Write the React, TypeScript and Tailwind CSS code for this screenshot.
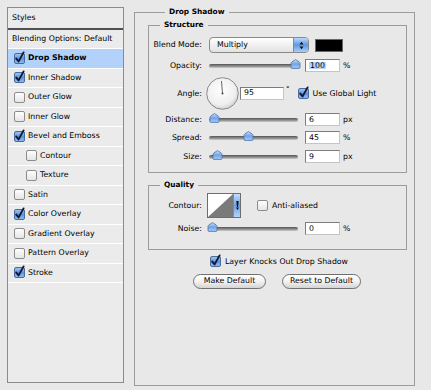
import React from 'react';

const font = { fontFamily: '"DejaVu Sans", Verdana, sans-serif' };

const CheckBox = ({ checked }: { checked?: boolean }) => (
  <svg width="11" height="11" viewBox="0 0 11 11" className="shrink-0 overflow-visible">
    <defs>
      <linearGradient id="cbOn" x1="0" y1="0" x2="0" y2="1">
        <stop offset="0" stopColor="#a9c9f2" />
        <stop offset="0.5" stopColor="#5d93de" />
        <stop offset="1" stopColor="#8fc0f5" />
      </linearGradient>
      <linearGradient id="cbOff" x1="0" y1="0" x2="0" y2="1">
        <stop offset="0" stopColor="#ffffff" />
        <stop offset="1" stopColor="#e4e4e4" />
      </linearGradient>
    </defs>
    <rect x="0.5" y="0.5" width="10" height="10" rx="1.5" fill={checked ? 'url(#cbOn)' : 'url(#cbOff)'} stroke={checked ? '#4a6b9e' : '#8c8c8c'} />
    {checked && (
      <path d="M2.3 5.6 L4.6 8.4 L9.6 -0.6" fill="none" stroke="#101830" strokeWidth="1.9" strokeLinecap="round" strokeLinejoin="round" />
    )}
  </svg>
);

const Thumb = () => (
  <svg width="11" height="10" viewBox="0 0 11 10">
    <defs>
      <linearGradient id="th" x1="0" y1="0" x2="0" y2="1">
        <stop offset="0" stopColor="#cfe3fb" />
        <stop offset="0.5" stopColor="#6ea3e6" />
        <stop offset="1" stopColor="#a8d0fa" />
      </linearGradient>
    </defs>
    <path d="M1 4.5 Q1 3.5 2 2.8 L5.5 0.6 L9 2.8 Q10 3.5 10 4.5 V8.5 Q10 9.4 9 9.4 H2 Q1 9.4 1 8.5 Z" fill="url(#th)" stroke="#4d6fa3" strokeWidth="0.8" />
  </svg>
);

const Slider = ({ pos }: { pos: number }) => (
  <div className="relative w-[89px] h-[10px] flex items-center">
    <div className="w-full h-[4px] rounded-full bg-gradient-to-b from-[#555] to-[#a5a5a5] border-b border-[#bbb]" />
    <div className="absolute top-[-2px]" style={{ left: pos }}>
      <Thumb />
    </div>
  </div>
);

const Field = ({ value, w = 35, selected }: { value: string; w?: number; selected?: boolean }) => (
  <div
    className="h-[13px] bg-white border border-[#7c7c7c] border-r-[#c4c4c4] border-b-[#c4c4c4] flex items-center pl-[3px] text-[7.8px] leading-none"
    style={{ width: w }}
  >
    {selected ? <span className="bg-[#b5d3fb] px-[1px]">{value}</span> : value}
  </div>
);

const Label = ({ children }: { children: React.ReactNode }) => (
  <div className="w-[54px] text-right pr-[1px] shrink-0">{children}</div>
);

const ListRow = ({
  label,
  checked,
  indent,
  active,
}: {
  label: string;
  checked?: boolean;
  indent?: boolean;
  active?: boolean;
}) => (
  <div
    className={`h-[19.5px] flex items-center gap-[3px] border-b border-white ${active ? 'bg-[#b2d2fb] font-bold' : ''} ${
      indent ? 'pl-[18px]' : 'pl-[6px]'
    }`}
  >
    <CheckBox checked={checked} />
    <span>{label}</span>
  </div>
);

const Dial = () => (
  <svg width="33" height="33" viewBox="0 0 33 33" className="shrink-0">
    <defs>
      <radialGradient id="dial" cx="0.45" cy="0.4" r="0.65">
        <stop offset="0" stopColor="#ffffff" />
        <stop offset="0.7" stopColor="#efefef" />
        <stop offset="1" stopColor="#c8c8c8" />
      </radialGradient>
    </defs>
    <circle cx="16.5" cy="16.5" r="15.8" fill="url(#dial)" stroke="#8a8a8a" strokeWidth="1" />
    <line x1="16.5" y1="16.5" x2="15.5" y2="4" stroke="#555" strokeWidth="0.9" />
    <circle cx="16.5" cy="16.5" r="1" fill="#444" />
  </svg>
);

export default function App() {
  return (
    <div className="w-[431px] h-[390px] bg-[#e8e8e8] flex pt-[7px] pl-[7px] text-[7.8px] text-black" style={font}>
      {/* style list */}
      <div className="w-[117px] h-[376px] border border-[#8b8b8b] bg-[#ebebeb] flex flex-col">
        <div className="h-[20px] flex items-center pl-[4px]">Styles</div>
        <div className="h-[2px] bg-[#505050]" />
        <div className="h-[19px] flex items-center pl-[4px] border-b border-white">Blending Options: Default</div>
        <ListRow label="Drop Shadow" checked active />
        <ListRow label="Inner Shadow" checked />
        <ListRow label="Outer Glow" />
        <ListRow label="Inner Glow" />
        <ListRow label="Bevel and Emboss" checked />
        <ListRow label="Contour" indent />
        <ListRow label="Texture" indent />
        <ListRow label="Satin" />
        <ListRow label="Color Overlay" checked />
        <ListRow label="Gradient Overlay" />
        <ListRow label="Pattern Overlay" />
        <ListRow label="Stroke" checked />
      </div>

      {/* settings */}
      <fieldset className="ml-[10px] w-[281px] h-[379px] border border-[#9c9c9c] pl-[13px] pr-[7px] flex flex-col">
        <legend className="ml-[17px] px-[4px] font-bold leading-[10px] text-[7.4px]">Drop Shadow</legend>

        <fieldset className="mt-[3px] border border-[#9c9c9c] h-[153px]">
          <legend className="ml-[11px] px-[4px] font-bold leading-[10px] text-[7.4px]">Structure</legend>
          <div className="flex flex-col">
            {/* blend mode */}
            <div className="mt-[7px] h-[16px] flex items-center">
              <Label>Blend Mode:</Label>
              <div className="ml-[6px] w-[100px] h-[16px] rounded-[4px] border border-[#8a8a8a] bg-gradient-to-b from-white to-[#e2e2e2] flex items-center overflow-hidden">
                <span className="flex-1 pl-[7px]">Multiply</span>
                <div className="w-[15px] h-full bg-gradient-to-b from-[#bcd8fa] via-[#5f98e2] to-[#a8d0f8] border-l border-[#6d8cc0] flex flex-col items-center justify-center gap-[1px]">
                  <svg width="5" height="9" viewBox="0 0 5 9">
                    <path d="M0.5 3.5 L2.5 0.8 L4.5 3.5 Z M0.5 5.5 L2.5 8.2 L4.5 5.5 Z" fill="#111" />
                  </svg>
                </div>
              </div>
              <div className="ml-[6px] w-[28px] h-[13px] bg-black border border-[#666]" />
            </div>

            {/* opacity */}
            <div className="mt-[6px] h-[13px] flex items-center">
              <Label>Opacity:</Label>
              <div className="ml-[6px]">
                <Slider pos={81} />
              </div>
              <div className="ml-[7px]">
                <Field value="100" selected />
              </div>
              <span className="ml-[3px]">%</span>
            </div>

            {/* angle */}
            <div className="mt-[5px] h-[33px] flex items-center">
              <Label>Angle:</Label>
              <div className="ml-[3px]">
                <Dial />
              </div>
              <div className="ml-[1px] h-[14px]">
                <Field value="95" w={44} />
              </div>
              <span className="ml-[2px] self-start mt-[7px] text-[7px]">°</span>
              <div className="ml-[8px] flex items-center gap-[4px]">
                <CheckBox checked />
                <span>Use Global Light</span>
              </div>
            </div>

            {/* distance */}
            <div className="mt-[3px] h-[13px] flex items-center">
              <Label>Distance:</Label>
              <div className="ml-[6px]">
                <Slider pos={0} />
              </div>
              <div className="ml-[7px]">
                <Field value="6" />
              </div>
              <span className="ml-[3px]">px</span>
            </div>

            {/* spread */}
            <div className="mt-[5px] h-[13px] flex items-center">
              <Label>Spread:</Label>
              <div className="ml-[6px]">
                <Slider pos={34} />
              </div>
              <div className="ml-[7px]">
                <Field value="45" />
              </div>
              <span className="ml-[3px]">%</span>
            </div>

            {/* size */}
            <div className="mt-[6px] h-[13px] flex items-center">
              <Label>Size:</Label>
              <div className="ml-[6px]">
                <Slider pos={3} />
              </div>
              <div className="ml-[7px]">
                <Field value="9" />
              </div>
              <span className="ml-[3px]">px</span>
            </div>
          </div>
        </fieldset>

        <fieldset className="mt-[7px] border border-[#9c9c9c] h-[70px]">
          <legend className="ml-[11px] px-[4px] font-bold leading-[10px] text-[7.4px]">Quality</legend>
          <div className="flex flex-col">
            <div className="mt-[3px] h-[25px] flex items-center">
              <Label>Contour:</Label>
              <div className="ml-[4px] flex h-[25px] border border-[#6e6e6e]">
                <svg width="25" height="23" viewBox="0 0 25 23" className="bg-white">
                  <polygon points="0,23 25,0 25,23" fill="#7a7a7a" />
                </svg>
                <div className="w-[7px] bg-gradient-to-b from-[#c6defb] via-[#6aa0e4] to-[#b4d6fa] border-l border-[#6d8cc0] flex items-center justify-center">
                  <svg width="3" height="9" viewBox="0 0 3 9">
                    <path d="M0.3 0 H2.7 L2 6 H1 Z M1.5 9 L0 6.5 H3 Z" fill="#111" />
                  </svg>
                </div>
              </div>
              <div className="ml-[16px] flex items-center gap-[4px]">
                <CheckBox />
                <span>Anti-aliased</span>
              </div>
            </div>
            <div className="mt-[4px] h-[13px] flex items-center">
              <Label>Noise:</Label>
              <div className="ml-[6px]">
                <Slider pos={-2} />
              </div>
              <div className="ml-[7px]">
                <Field value="0" />
              </div>
              <span className="ml-[3px]">%</span>
            </div>
          </div>
        </fieldset>

        <div className="mt-[6px] flex items-center gap-[4px] pl-[62px]">
          <CheckBox checked />
          <span>Layer Knocks Out Drop Shadow</span>
        </div>

        <div className="mt-[6px] flex gap-[16px] pl-[45px]">
          <button className="w-[73px] h-[15px] rounded-full border border-[#707070] bg-gradient-to-b from-white via-[#f2f2f2] to-[#d4d4d4] flex items-center justify-center leading-none">
            Make Default
          </button>
          <button className="w-[79px] h-[15px] rounded-full border border-[#707070] bg-gradient-to-b from-white via-[#f2f2f2] to-[#d4d4d4] flex items-center justify-center leading-none">
            Reset to Default
          </button>
        </div>
      </fieldset>
    </div>
  );
}
